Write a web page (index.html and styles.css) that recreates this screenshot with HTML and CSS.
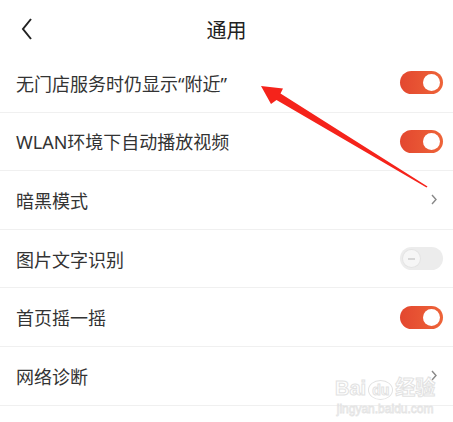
FILE: index.html
```html
<!DOCTYPE html>
<html lang="zh-CN">
<head>
  <meta charset="UTF-8" />
  <meta name="viewport" content="width=device-width, initial-scale=1.0"/>
  <title>通用</title>
  <link rel="stylesheet" href="styles.css">
</head>
<body>

  <!-- Top bar -->
  <header class="topbar">
    <svg class="back" width="12" height="24" viewBox="0 0 12 24">
      <polyline points="10,2 2,12 10,22" fill="none" stroke="#222" stroke-width="2" stroke-linejoin="miter"/>
    </svg>
    <h1>通用</h1>
  </header>

  <!-- Settings list -->
  <ul class="list">
    <li class="row">
      <span>无门店服务时仍显示“附近”</span>
      <span class="switch on"><i></i></span>
    </li>
    <li class="row">
      <span>WLAN环境下自动播放视频</span>
      <span class="switch on"><i></i></span>
    </li>
    <li class="row">
      <span>暗黑模式</span>
      <svg class="more" width="6" height="11" viewBox="0 0 6 11">
        <polyline points="1,1 5,5.5 1,10" fill="none" stroke="#888" stroke-width="1.4"/>
      </svg>
    </li>
    <li class="row">
      <span>图片文字识别</span>
      <span class="switch off"><i></i></span>
    </li>
    <li class="row">
      <span>首页摇一摇</span>
      <span class="switch on"><i></i></span>
    </li>
    <li class="row">
      <span>网络诊断</span>
      <svg class="more" width="6" height="11" viewBox="0 0 6 11">
        <polyline points="1,1 5,5.5 1,10" fill="none" stroke="#888" stroke-width="1.4"/>
      </svg>
    </li>
  </ul>

  <!-- watermark -->
  <div class="mark">
    <div class="mark-logo">Bai<b>du</b>经验</div>
    <div class="mark-url">jingyan.baidu.com</div>
  </div>

  <!-- red annotation arrow -->
  <svg class="arrow" width="453" height="422" viewBox="0 0 453 422">
    <polygon points="261,86 283,88.5 280.5,93.5 427.5,186.5 426.5,187.5 276.5,100 271,104" fill="#f5231b"/>
  </svg>

</body>
</html>
```

FILE: styles.css
```css
body {
  margin: 0;
  background: #fff;
  font-family: "Noto Sans", "Noto Sans CJK SC", sans-serif;
  color: #333;
  position: relative;
  width: 453px;
  height: 422px;
  overflow: hidden;
}

/* Top bar */
.topbar {
  height: 54px;
  display: flex;
  align-items: center;
  justify-content: center;
  position: relative;
}
.topbar h1 {
  margin: 0;
  font-size: 20px;
  font-weight: normal;
  color: #222;
  padding-top: 4px;
}
.back {
  position: absolute;
  left: 21px;
  top: 17px;
}

/* List */
.list {
  list-style: none;
  margin: 0;
  padding: 0;
}
.row {
  box-sizing: border-box;
  height: 58.6px;
  padding: 0 10px 0 16px;
  border-bottom: 1px solid #f0f0f0;
  display: flex;
  align-items: center;
  justify-content: space-between;
  font-size: 18px;
}
.more {
  margin-right: 6px;
}

/* Switch */
.switch {
  width: 43px;
  height: 23px;
  border-radius: 12px;
  display: flex;
  align-items: center;
  box-sizing: border-box;
  padding: 0 3px;
}
.switch i {
  width: 17px;
  height: 17px;
  border-radius: 50%;
  background: #fff;
  display: block;
  position: relative;
}
.switch.on {
  background: linear-gradient(90deg, #e3472f, #ee6439);
  justify-content: flex-end;
}
.switch.off {
  background: #ececec;
}
.switch.off i {
  background: #f6f6f6;
  box-shadow: 0 0 0 1px #e4e4e4;
}
.switch.off i::after {
  content: "";
  position: absolute;
  left: 5px;
  top: 8px;
  width: 7px;
  height: 1.5px;
  background: #d6d6d6;
}

/* Watermark */
.mark {
  position: absolute;
  left: 335px;
  top: 378px;
  color: #fff;
  text-align: center;
  font-family: "Liberation Sans", "Noto Sans CJK SC", sans-serif;
}
.mark-logo {
  font-size: 20px;
  font-weight: bold;
  -webkit-text-stroke: 1px #e2e2e2;
  line-height: 20px;
}
.mark-logo b {
  font-size: 14px;
  border: 1px solid #e2e2e2;
  border-radius: 50%;
  padding: 1px 3px;
  margin: 0 2px;
}
.mark-url {
  font-size: 12px;
  -webkit-text-stroke: 0.8px #e4e4e4;
  margin-top: 2px;
}

/* Annotation */
.arrow {
  position: absolute;
  left: 0;
  top: 0;
  pointer-events: none;
}
```
